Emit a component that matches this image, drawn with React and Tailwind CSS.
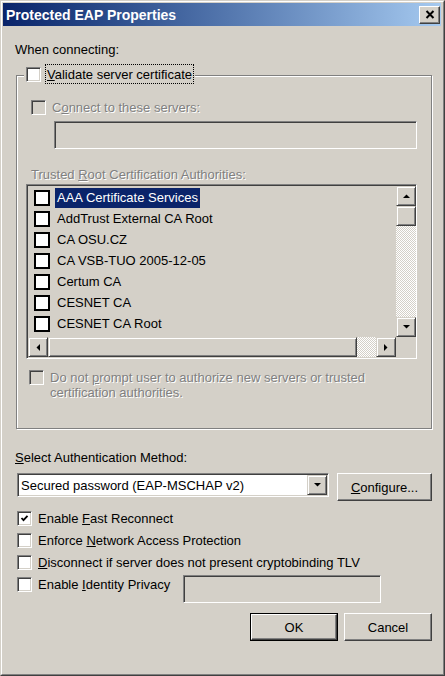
import React from "react";

const FONT = "font-['Liberation_Sans',Arial,sans-serif]";
const DIS = "text-[#808080] [text-shadow:1px_1px_0_#fff]";

function Arrow({ dir }) {
  if (dir === "up")
    return (
      <svg width="7" height="4" viewBox="0 0 7 4"><polygon points="0,4 7,4 3.5,0.5" fill="#000" /></svg>
    );
  if (dir === "down")
    return (
      <svg width="7" height="4" viewBox="0 0 7 4"><polygon points="0,0 7,0 3.5,3.5" fill="#000" /></svg>
    );
  if (dir === "left")
    return (
      <svg width="4" height="7" viewBox="0 0 4 7"><polygon points="4,0 4,7 0.5,3.5" fill="#000" /></svg>
    );
  return (
    <svg width="4" height="7" viewBox="0 0 4 7"><polygon points="0,0 0,7 3.5,3.5" fill="#000" /></svg>
  );
}

function SBtn({ dir, className = "" }) {
  return (
    <div
      className={
        "w-[20px] h-[20px] shrink-0 flex items-center justify-center bg-[#D4D0C8] border border-t-[#D4D0C8] border-l-[#D4D0C8] border-r-[#404040] border-b-[#404040] shadow-[inset_1px_1px_0_#fff,inset_-1px_-1px_0_#808080] " +
        className
      }
    >
      {dir ? <Arrow dir={dir} /> : null}
    </div>
  );
}

function Check({ checked, disabled }) {
  return (
    <div
      className={
        "w-[15px] h-[15px] shrink-0 flex items-center justify-center border border-t-[#808080] border-l-[#808080] border-r-white border-b-white shadow-[inset_1px_1px_0_#404040,inset_-1px_-1px_0_#D4D0C8] " +
        (disabled ? "bg-[#D4D0C8]" : "bg-white")
      }
    >
      {checked ? (
        <svg width="9" height="9" viewBox="0 0 9 9">
          <polyline points="1.5,4 3.5,6.2 7.5,1.8" fill="none" stroke="#000" strokeWidth="1.8" />
        </svg>
      ) : null}
    </div>
  );
}

function Sunken({ className = "", children }) {
  return (
    <div
      className={
        "border border-t-[#808080] border-l-[#808080] border-r-white border-b-white shadow-[inset_1px_1px_0_#404040,inset_-1px_-1px_0_#D4D0C8] " +
        className
      }
    >
      {children}
    </div>
  );
}

function Button({ children, def, className = "" }) {
  const inner = (
    <div className="w-full h-full flex items-center justify-center border border-t-white border-l-white border-r-[#404040] border-b-[#404040] shadow-[inset_-1px_-1px_0_#808080] text-black">
      {children}
    </div>
  );
  if (def)
    return <div className={"border border-black " + className}>{inner}</div>;
  return <div className={className}>{inner}</div>;
}

const certs = [
  "AAA Certificate Services",
  "AddTrust External CA Root",
  "CA OSU.CZ",
  "CA VSB-TUO 2005-12-05",
  "Certum CA",
  "CESNET CA",
  "CESNET CA Root",
  "",
];

export default function App() {
  return (
    <div
      className={
        "w-[445px] h-[676px] bg-[#D4D0C8] flex flex-col border border-t-[#D4D0C8] border-l-[#D4D0C8] border-r-[#404040] border-b-[#404040] text-[13px] leading-[15px] text-black " +
        FONT
      }
    >
      <div className="flex-1 flex flex-col border border-t-white border-l-white border-r-[#808080] border-b-[#808080] pl-px pt-px pr-[2px]">
        {/* Title bar */}
        <div className="h-[23px] shrink-0 flex items-center bg-gradient-to-r from-[#0A246A] to-[#A6CAF0] pl-[3px] pr-[1px]">
          <span className="text-white font-bold text-[14px] leading-[16px] flex-1">
            Protected EAP Properties
          </span>
          <div className="w-[21px] h-[18px] flex items-center justify-center bg-[#D4D0C8] border border-t-white border-l-white border-r-[#404040] border-b-[#404040] shadow-[inset_-1px_-1px_0_#808080]">
            <svg width="10" height="9" viewBox="0 0 10 9">
              <path d="M1.5 1 L8.5 8 M8.5 1 L1.5 8" stroke="#000" strokeWidth="2" />
            </svg>
          </div>
        </div>

        {/* Body */}
        <div className="flex flex-col pr-[9px]">
          <div className="mt-[16px] pl-[12px] h-[15px]">When connecting:</div>

          {/* Group box */}
          <div className="relative mt-[18px] ml-[13px] h-[354px] border border-[#808080] shadow-[inset_1px_1px_0_#fff,1px_1px_0_#fff] flex flex-col">
            <div className="absolute left-[7px] top-[-12px] h-[20px] flex items-center bg-[#D4D0C8] pl-[2px] pr-[1px]">
              <Check />
              <div className="ml-[4px] h-[20px] px-px flex items-center border border-dotted border-black">
                <span>
                  <u>V</u>alidate server certificate
                </span>
              </div>
            </div>

            <div className="mt-[24px] ml-[14px] h-[15px] flex items-center">
              <Check disabled />
              <span className={"ml-[6px] " + DIS}>
                C<u>o</u>nnect to these servers:
              </span>
            </div>

            <Sunken className="mt-[6px] ml-[37px] w-[363px] h-[28px] bg-[#D4D0C8]" />

            <div className={"mt-[18px] ml-[14px] h-[15px] " + DIS}>
              Trusted <u>R</u>oot Certification Authorities:
            </div>

            {/* List box */}
            <Sunken className="mt-[2px] ml-[9px] w-[391px] h-[175px] bg-[#D4D0C8] flex flex-col">
              <div className="flex h-[151px] mt-px ml-px">
                <div className="flex-1 overflow-hidden pt-px">
                  {certs.map((c, i) => (
                    <div key={i} className="h-[21px] flex items-center pl-[6px]">
                      <div className="w-[16px] h-[16px] shrink-0 border-2 border-black bg-white" />
                      {c ? (
                        <span
                          className={
                            "ml-[5px] h-[20px] px-[2px] flex items-center whitespace-nowrap " +
                            (i === 0 ? "bg-[#0A246A] text-white" : "text-black")
                          }
                        >
                          {c}
                        </span>
                      ) : null}
                    </div>
                  ))}
                </div>
                <div className="w-[20px] flex flex-col">
                  <SBtn dir="up" />
                  <SBtn />
                  <div className="flex-1 bg-[conic-gradient(#fff_25%,#D4D0C8_0_50%,#fff_0_75%,#D4D0C8_0)] bg-size-[2px_2px]" />
                  <SBtn dir="down" />
                </div>
              </div>
              <div className="flex h-[20px] ml-px">
                <SBtn dir="left" />
                <SBtn className="w-[309px]" />
                <div className="flex-1 bg-[conic-gradient(#fff_25%,#D4D0C8_0_50%,#fff_0_75%,#D4D0C8_0)] bg-size-[2px_2px]" />
                <SBtn dir="right" />
                <div className="w-[20px] bg-[#D4D0C8]" />
              </div>
            </Sunken>

            <div className="mt-[11px] ml-[12px] flex items-start">
              <Check disabled />
              <div className={"ml-[6px] " + DIS}>
                Do not <u>p</u>rompt user to authorize new servers or trusted
                <br />
                certification authorities.
              </div>
            </div>
          </div>

          <div className="mt-[21px] pl-[12px] h-[15px]">
            <u>S</u>elect Authentication Method:
          </div>

          <div className="mt-[8px] flex items-start">
            <Sunken className="ml-[14px] w-[312px] h-[24px] bg-white flex items-center">
              <span className="flex-1 pl-[3px]">Secured password (EAP-MSCHAP v2)</span>
              <SBtn dir="down" className="mr-px h-[20px] w-[20px]" />
            </Sunken>
            <Button className="ml-auto w-[95px] h-[28px]">
              <span>
                <u>C</u>onfigure...
              </span>
            </Button>
          </div>

          <div className="mt-[6px] flex flex-col pl-[14px]">
            <div className="h-[22px] flex items-center">
              <Check checked />
              <span className="ml-[6px]">
                Enable <u>F</u>ast Reconnect
              </span>
            </div>
            <div className="h-[22px] flex items-center">
              <Check />
              <span className="ml-[6px]">
                Enforce <u>N</u>etwork Access Protection
              </span>
            </div>
            <div className="h-[22px] flex items-center">
              <Check />
              <span className="ml-[6px]">
                <u>D</u>isconnect if server does not present cryptobinding TLV
              </span>
            </div>
            <div className="flex items-start">
              <div className="h-[22px] w-[166px] flex items-center">
                <Check />
                <span className="ml-[6px]">
                  Enable <u>I</u>dentity Privacy
                </span>
              </div>
              <Sunken className="mt-[2px] w-[198px] h-[28px] bg-[#D4D0C8]" />
            </div>
          </div>

          <div className="mt-[10px] flex justify-end gap-[6px]">
            <Button def className="w-[88px] h-[28px]">
              OK
            </Button>
            <Button className="w-[88px] h-[28px]">Cancel</Button>
          </div>
        </div>
      </div>
    </div>
  );
}
